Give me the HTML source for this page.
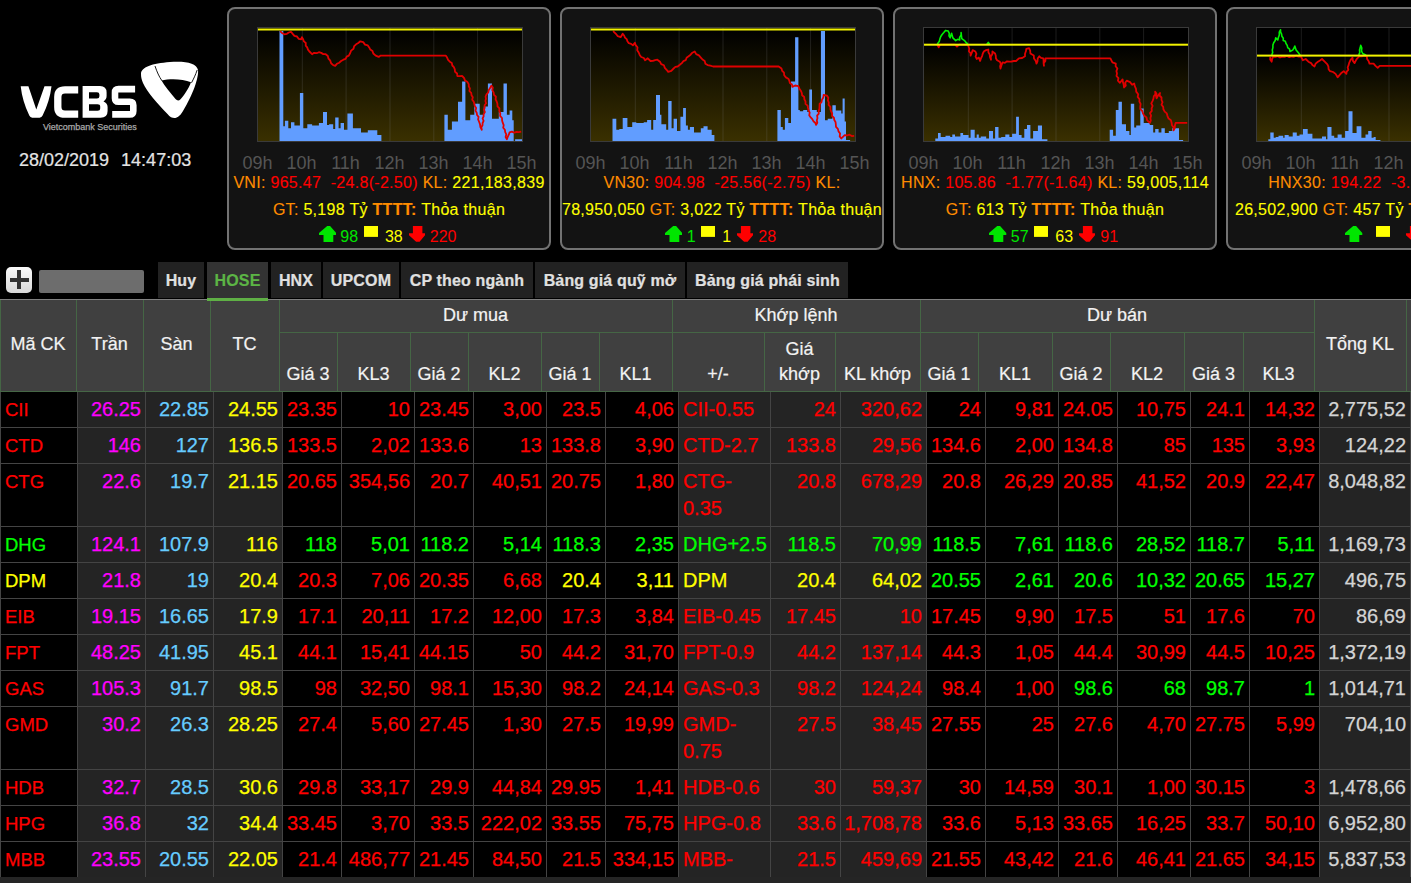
<!DOCTYPE html>
<html><head><meta charset="utf-8"><title>VCBS</title>
<style>
*{box-sizing:border-box}
html,body{margin:0;padding:0;background:#000;overflow:hidden}
body{width:1411px;height:883px;position:relative;font-family:"Liberation Sans",sans-serif;color:#ddd}
.abs{position:absolute}
.box{position:absolute;top:7px;width:324px;height:243px;border:2px solid #727272;border-radius:8px;background:#131313;overflow:hidden}
.chart{position:absolute;left:28px;top:18px;width:266px;height:115px}
.hr{position:absolute;top:144px;font-size:18px;color:#555;width:40px;text-align:center;line-height:20px}
.txt{position:absolute;left:-1px;top:160px;width:322px;text-align:center;font-size:16px;line-height:27px;color:#ff0;letter-spacing:0.3px;-webkit-text-stroke:0.12px currentColor}
.o{color:#ff8c00}.r{color:#f00}.y{color:#ff0}
.cnt{position:absolute;left:0;top:217px;width:320px;text-align:center;font-size:16px;line-height:20px;white-space:nowrap}
.tab{position:absolute;top:262px;height:36px;background:#222;color:#e0e0e0;font-weight:bold;font-size:16px;line-height:38px;text-align:center;-webkit-text-stroke:0.2px currentColor;letter-spacing:0.15px}
.hd{position:absolute;background:#404040;color:#eee;font-size:18px;text-align:center}
.c{position:absolute;font-size:20px;line-height:27px;padding-top:3.5px;white-space:normal;-webkit-text-stroke:0.25px currentColor}
</style></head><body>

<svg class="abs" style="left:0;top:0" width="220" height="140" viewBox="0 0 220 140">
<g fill="#fff">
<path d="M20.7 86.2 L28.4 86.2 L36.3 109.5 L44.5 86.2 L51.5 86.2 Q49.8 101 42.6 115.6 Q41.6 117.7 39.6 117.7 L32.2 117.7 Q30.2 117.7 29.3 115.6 Q22.3 101 20.7 86.2 Z"/>
<path d="M82.6 85.9 H100 Q106.6 85.9 106.6 92.5 V96 Q106.6 99.5 103.5 101.4 Q107.6 103.3 107.6 107 V111 Q107.6 117.8 100.5 117.8 H82.6 Z M89 92.3 H97 Q99.4 92.3 99.4 94.5 V96.3 Q99.4 98.6 97 98.6 H89 Z M89 104.2 H97.5 Q100.2 104.2 100.2 106.5 V108.2 Q100.2 110.7 97.5 110.7 H89 Z" fill-rule="evenodd"/>
<path d="M141 74 C141 67 152 63.5 170 62 C186 61 196.5 63 198 70 C199 77 193 95 183 111 C179.5 117 176.5 118 174.5 118 C172 118 170 117 167.5 114 C158 104 147 92 143 83 C141.5 79.5 141 77 141 74 Z M161.5 80.5 C170 78.3 183 78.8 191 82.3 C188.5 89 184 95.5 180.5 99.3 C178.8 101 177 100.8 175.5 99 C170 92 164.5 86 161.5 80.5 Z" fill-rule="evenodd"/>
</g>
<g fill="none" stroke="#fff" stroke-linejoin="round">
<path d="M78.2 89.9 H65 Q57.8 89.9 57.8 97 V107 Q57.8 114.2 65 114.2 H78.2" stroke-width="7.3"/>
<path d="M135.1 89.1 H118.5 Q115 89.1 115 92.6 V98.2 Q115 101.7 118.5 101.7 H129.8 Q133.3 101.7 133.3 105.2 V110.9 Q133.3 114.4 129.8 114.4 H112.2" stroke-width="6.6"/>
</g>
<path d="M155 66 C157 72 159 76.5 162 80.8" stroke="#000" stroke-width="0.9" fill="none"/>
<path d="M197.2 70 C195.5 75 193.5 79 191.5 82.8" stroke="#000" stroke-width="0.9" fill="none"/>
<text x="43" y="130" font-family="Liberation Sans" font-size="8.6" fill="#a8a8a8" stroke="#a8a8a8" stroke-width="0.25" textLength="93.7" lengthAdjust="spacingAndGlyphs">Vietcombank Securities</text>
</svg>
<div class="abs" style="left:19px;top:148.7px;font-size:18px;line-height:22px;color:#e4e4e4;white-space:pre;-webkit-text-stroke:0.2px currentColor">28/02/2019<span style="margin-left:12px">14:47:03</span></div>

<div class="box" style="left:227px">
<div class="chart"><svg width="266" height="115" viewBox="0 0 266 115"><defs><linearGradient id="g140354874106368" x1="0" y1="0" x2="0" y2="1"><stop offset="0" stop-color="#000"/><stop offset="1" stop-color="#3a3000"/></linearGradient></defs><rect x="0" y="0" width="266" height="115" fill="#000"/><rect x="1" y="2.5" width="264" height="111.5" fill="url(#g140354874106368)"/><rect x="44.8" y="1" width="1" height="113" fill="#808080" fill-opacity="0.22"/><rect x="88.6" y="1" width="1" height="113" fill="#808080" fill-opacity="0.22"/><rect x="132.5" y="1" width="1" height="113" fill="#808080" fill-opacity="0.22"/><rect x="176.3" y="1" width="1" height="113" fill="#808080" fill-opacity="0.22"/><rect x="220.1" y="1" width="1" height="113" fill="#808080" fill-opacity="0.22"/><path d="M22.5 114.5V4.1H26.3V114.5ZM26.3 114.5V99.3H27.9V114.5ZM27.9 114.5V93.8H31.3V114.5ZM31.3 114.5V101.3H34.0V114.5ZM34.0 114.5V95.2H37.4V114.5ZM37.4 114.5V98.6H42.9V114.5ZM42.9 114.5V66.0H46.3V114.5ZM46.3 114.5V101.3H50.3V114.5ZM50.3 114.5V97.2H55.1V114.5ZM55.1 114.5V98.6H61.9V114.5ZM61.9 114.5V95.9H66.0V114.5ZM66.0 114.5V85.0H70.0V114.5ZM70.0 114.5V97.9H72.1V114.5ZM72.1 114.5V97.2H76.2V114.5ZM76.2 114.5V102.0H78.2V114.5ZM78.2 114.5V90.4H81.6V114.5ZM81.6 114.5V101.3H83.6V114.5ZM83.6 114.5V95.9H87.0V114.5ZM87.0 114.5V102.7H90.4V114.5ZM90.4 114.5V86.4H95.9V114.5ZM95.9 114.5V101.3H104.0V114.5ZM104.0 114.5V105.4H110.8V114.5ZM110.8 114.5V103.3H120.3V114.5ZM120.3 114.5V108.1H124.4V114.5ZM187.4 114.5V87.7H190.8V114.5ZM190.8 114.5V102.7H194.9V114.5ZM194.9 114.5V94.5H201.0V114.5ZM201.0 114.5V74.8H205.1V114.5ZM205.1 114.5V54.4H208.4V114.5ZM208.4 114.5V93.2H213.2V114.5ZM213.2 114.5V87.7H217.3V114.5ZM217.3 114.5V76.8H222.7V114.5ZM222.7 114.5V87.7H226.8V114.5ZM226.8 114.5V79.6H230.9V114.5ZM230.9 114.5V56.5H235.0V114.5ZM235.0 114.5V91.8H241.8V114.5ZM241.8 114.5V85.0H246.5V114.5ZM246.5 114.5V56.5H249.9V114.5ZM249.9 114.5V87.7H252.6V114.5ZM252.6 114.5V83.6H255.3V114.5ZM255.3 114.5V93.2H256.7V114.5ZM258.1 114.5V112.2H265.5V114.5Z" fill="#619dff"/><polyline points="23.1,4.1 25.2,6.2 27.5,7.3 29.9,6.8 31.8,5.5 34.0,4.8 35.7,6.9 37.4,8.9 40.0,9.5 41.6,11.8 44.2,12.3 44.9,10.2 46.1,12.2 46.9,14.4 48.8,16.0 48.7,18.6 50.2,20.4 51.0,22.6 52.4,24.5 55.1,27.2 57.1,25.8 59.7,26.2 61.9,25.2 64.2,25.9 66.3,27.1 68.7,27.2 70.8,29.0 71.5,31.7 73.3,33.7 74.1,36.3 76.2,38.1 78.2,38.8 79.9,36.8 82.3,35.7 84.1,34.0 86.4,32.7 88.6,31.9 89.7,29.6 91.8,28.6 93.1,26.2 94.1,23.6 96.5,21.8 97.2,19.1 99.1,17.3 101.3,16.0 103.3,14.3 106.2,15.1 108.0,17.6 110.8,18.4 112.2,20.4 113.3,22.6 115.5,24.1 116.3,26.5 118.7,28.6 121.7,29.9 123.7,28.6 126.1,28.6 128.5,28.6 130.9,28.6 133.2,28.6 135.6,28.6 138.0,28.6 140.2,28.6 142.4,28.6 144.6,28.6 146.8,28.6 149.0,28.6 151.2,28.6 153.4,28.6 155.6,28.6 157.9,28.6 160.1,28.6 162.3,28.6 164.5,28.6 166.7,28.6 168.9,28.6 171.1,28.6 173.3,28.6 175.5,28.6 177.7,28.6 179.9,28.6 182.1,28.6 184.3,28.6 186.5,28.6 188.7,28.6 190.1,30.6 191.1,32.9 192.8,34.7 194.8,36.0 195.3,38.5 196.9,40.1 197.8,42.3 198.0,44.8 200.1,46.5 200.3,49.0 202.7,49.1 205.1,49.0 207.0,50.9 208.1,53.6 210.5,55.1 211.7,57.1 211.8,59.4 212.9,61.5 212.4,64.0 214.2,65.9 214.5,68.2 215.8,70.2 215.2,72.7 216.7,74.6 217.3,76.8 217.8,79.1 219.2,81.1 218.5,83.6 219.7,85.7 220.0,88.0 221.6,89.9 221.1,92.4 222.0,94.5 223.0,97.2 223.4,100.1 224.8,102.7 224.3,100.4 225.5,98.3 225.6,96.0 226.6,93.9 225.6,91.5 226.6,89.4 226.6,87.2 227.9,85.1 227.0,82.7 227.7,80.6 227.6,78.3 229.1,76.3 228.4,73.9 229.0,71.8 228.6,69.5 229.5,67.3 231.3,65.4 231.8,62.9 233.3,60.8 234.3,58.5 235.8,60.5 235.3,63.2 236.6,65.4 237.0,67.8 238.9,69.7 238.6,72.4 239.7,74.5 240.4,76.8 240.5,79.4 242.4,81.4 242.3,84.0 243.3,86.3 243.1,88.9 245.0,91.0 245.1,93.5 245.8,95.9 246.7,98.1 246.2,100.7 247.9,102.8 248.2,105.2 249.3,107.4 248.6,110.0 249.9,112.2 250.7,109.9 251.8,107.7 252.6,105.4 254.9,104.6 257.3,105.7 259.6,104.9 261.9,105.1 264.2,104.7" fill="none" stroke="#e00000" stroke-width="1.8" stroke-linejoin="round"/><rect x="1" y="1.5" width="264" height="2" fill="#f2f200"/><rect x="0.5" y="0.5" width="265" height="114" fill="none" stroke="#3a3a3a"/></svg></div>
<div class="hr" style="left:8.5px">09h</div>
<div class="hr" style="left:52.5px">10h</div>
<div class="hr" style="left:96.5px">11h</div>
<div class="hr" style="left:140.5px">12h</div>
<div class="hr" style="left:184.5px">13h</div>
<div class="hr" style="left:228.5px">14h</div>
<div class="hr" style="left:272.5px">15h</div>
<div class="txt"><span class="o">VNI:</span> <span class="r">965.47&nbsp; -24.8(-2.50)</span> <span class="o">KL:</span> 221,183,839 <span class="o">GT:</span> 5,198 Tỷ <b class="o">TTTT:</b> Thỏa thuận</div>
<div class="cnt" style="padding-right:2.7px"><svg width="17.3" height="16.1" viewBox="0 0 17.3 16.1" style="vertical-align:-0.3px;margin-right:4.2px"><path d="M8.2 0 H11.1 L17.3 7 V8.9 H14.3 V16.1 H4.5 V8.9 H0 V7 Z" fill="#00e600"/></svg><span style="color:#00e600">98</span><svg width="14" height="10.9" viewBox="0 0 14 10.9" style="vertical-align:4.8px;margin-left:5.5px;margin-right:7.3px"><rect width="14" height="10.9" fill="#ff0"/></svg><span class="y">38</span><svg width="16.1" height="15.8" viewBox="0 0 16.1 15.8" style="vertical-align:-0.3px;margin-left:5.8px;margin-right:5.2px"><path d="M3.9 0 H13.4 V7.2 H16.1 V9.2 L10.6 15.8 H7.1 L0 9.2 V7.2 H3.9 Z" fill="#f00"/></svg><span class="r">220</span></div>
</div>
<div class="box" style="left:560px">
<div class="chart"><svg width="266" height="115" viewBox="0 0 266 115"><defs><linearGradient id="g140354874106176" x1="0" y1="0" x2="0" y2="1"><stop offset="0" stop-color="#000"/><stop offset="1" stop-color="#3a3000"/></linearGradient></defs><rect x="0" y="0" width="266" height="115" fill="#000"/><rect x="1" y="2.5" width="264" height="111.5" fill="url(#g140354874106176)"/><rect x="44.8" y="1" width="1" height="113" fill="#808080" fill-opacity="0.22"/><rect x="88.6" y="1" width="1" height="113" fill="#808080" fill-opacity="0.22"/><rect x="132.5" y="1" width="1" height="113" fill="#808080" fill-opacity="0.22"/><rect x="176.3" y="1" width="1" height="113" fill="#808080" fill-opacity="0.22"/><rect x="220.1" y="1" width="1" height="113" fill="#808080" fill-opacity="0.22"/><path d="M22.5 114.5V91.8H26.3V114.5ZM26.3 114.5V102.7H29.3V114.5ZM29.3 114.5V102.0H32.7V114.5ZM32.7 114.5V91.1H37.4V114.5ZM37.4 114.5V99.9H42.2V114.5ZM42.2 114.5V95.2H46.3V114.5ZM46.3 114.5V95.9H53.7V114.5ZM53.7 114.5V95.2H57.1V114.5ZM57.1 114.5V93.1H61.2V114.5ZM61.2 114.5V102.7H63.2V114.5ZM63.2 114.5V93.1H66.0V114.5ZM66.0 114.5V68.0H70.0V114.5ZM70.0 114.5V87.7H71.4V114.5ZM71.4 114.5V97.2H76.2V114.5ZM76.2 114.5V102.7H78.2V114.5ZM78.2 114.5V74.1H81.6V114.5ZM81.6 114.5V101.3H83.6V114.5ZM83.6 114.5V91.8H87.0V114.5ZM87.0 114.5V104.0H90.4V114.5ZM90.4 114.5V89.7H93.1V114.5ZM93.1 114.5V80.9H95.9V114.5ZM95.9 114.5V98.6H97.9V114.5ZM97.9 114.5V102.7H99.9V114.5ZM99.9 114.5V99.9H104.0V114.5ZM104.0 114.5V105.4H106.7V114.5ZM106.7 114.5V105.4H110.8V114.5ZM110.8 114.5V101.3H113.5V114.5ZM113.5 114.5V99.3H117.6V114.5ZM117.6 114.5V102.7H121.7V114.5ZM121.7 114.5V108.1H124.4V114.5ZM187.4 114.5V83.0H190.8V114.5ZM190.8 114.5V100.0H192.8V114.5ZM192.8 114.5V102.7H194.9V114.5ZM194.9 114.5V91.1H198.3V114.5ZM198.3 114.5V95.9H201.0V114.5ZM201.0 114.5V54.4H205.1V114.5ZM205.1 114.5V10.2H208.4V114.5ZM208.4 114.5V83.0H209.8V114.5ZM209.8 114.5V84.3H213.2V114.5ZM213.2 114.5V83.0H217.3V114.5ZM217.3 114.5V85.0H219.3V114.5ZM219.3 114.5V62.6H222.0V114.5ZM222.0 114.5V83.0H224.1V114.5ZM224.1 114.5V83.0H226.8V114.5ZM226.8 114.5V85.0H230.9V114.5ZM230.9 114.5V4.1H235.0V114.5ZM235.0 114.5V93.2H237.7V114.5ZM237.7 114.5V91.8H242.4V114.5ZM242.4 114.5V78.2H245.8V114.5ZM245.8 114.5V83.6H251.3V114.5ZM251.3 114.5V86.4H252.6V114.5ZM252.6 114.5V71.4H254.7V114.5ZM254.7 114.5V94.5H256.0V114.5ZM256.0 114.5V112.9H260.1V114.5Z" fill="#619dff"/><polyline points="23.1,4.1 25.9,6.8 27.8,9.2 30.6,10.2 32.7,6.8 34.1,8.5 35.0,10.6 36.7,12.1 37.4,14.3 38.8,16.2 41.1,16.9 42.9,18.4 44.9,15.7 45.7,18.2 47.5,20.3 47.2,23.2 48.7,25.5 49.7,27.9 51.2,30.0 53.8,31.0 55.1,33.3 57.8,31.3 60.5,34.0 62.9,33.9 65.1,33.1 67.3,32.7 70.0,34.7 71.2,37.1 73.9,38.3 74.8,40.9 76.6,42.8 78.2,44.9 81.3,43.8 83.6,41.5 85.4,39.9 87.7,39.5 89.8,37.8 91.8,36.1 93.3,34.2 95.7,33.2 96.6,30.7 98.6,29.3 100.6,27.7 102.4,25.7 104.7,24.5 106.2,27.1 108.9,28.4 110.8,30.6 112.5,32.5 114.7,33.9 115.4,36.7 117.6,38.1 120.3,38.7 123.1,39.5 125.5,39.5 128.0,39.5 130.5,39.5 133.0,39.5 135.5,39.5 138.0,39.5 140.2,39.5 142.4,39.5 144.6,39.5 146.8,39.5 149.0,39.5 151.2,39.5 153.4,39.5 155.6,39.5 157.9,39.5 160.1,39.5 162.3,39.5 164.5,39.5 166.7,39.5 168.9,39.5 171.1,39.5 173.3,39.5 175.5,39.5 177.7,39.5 179.9,39.5 182.1,39.5 184.3,39.5 186.5,39.5 188.7,39.5 191.5,41.5 192.2,43.9 194.0,45.7 194.2,48.3 195.9,50.4 198.3,51.7 199.3,53.7 199.9,56.0 202.0,57.5 202.3,59.9 205.1,58.5 208.4,59.2 209.3,61.6 210.8,63.7 211.8,66.0 212.1,68.3 214.2,70.0 214.4,72.4 215.5,74.5 215.5,76.9 217.6,78.6 218.0,80.9 218.6,83.3 219.7,85.6 219.2,88.3 220.7,90.4 222.3,92.1 223.4,94.2 225.2,95.7 226.1,97.9 227.3,95.8 226.8,93.3 227.5,91.1 227.1,88.6 228.8,86.6 228.6,84.1 229.4,81.9 229.5,79.6 229.6,77.0 231.5,75.1 232.0,72.6 233.3,70.5 233.6,68.0 237.0,68.7 238.3,70.8 237.9,73.3 238.8,75.5 238.6,77.9 240.4,79.9 240.4,82.3 241.1,84.4 242.2,86.5 242.0,89.0 243.9,90.7 244.3,93.0 245.5,94.9 245.8,97.2 246.0,99.9 247.9,101.9 248.5,104.4 250.1,106.5 249.7,109.4 251.3,111.5 252.9,109.8 254.7,108.1 257.0,108.5 259.5,107.7 261.8,109.1 264.2,108.8" fill="none" stroke="#e00000" stroke-width="1.8" stroke-linejoin="round"/><rect x="1" y="1.5" width="264" height="2" fill="#f2f200"/><rect x="0.5" y="0.5" width="265" height="114" fill="none" stroke="#3a3a3a"/></svg></div>
<div class="hr" style="left:8.5px">09h</div>
<div class="hr" style="left:52.5px">10h</div>
<div class="hr" style="left:96.5px">11h</div>
<div class="hr" style="left:140.5px">12h</div>
<div class="hr" style="left:184.5px">13h</div>
<div class="hr" style="left:228.5px">14h</div>
<div class="hr" style="left:272.5px">15h</div>
<div class="txt"><span class="o">VN30:</span> <span class="r">904.98&nbsp; -25.56(-2.75)</span> <span class="o">KL:</span> 78,950,050 <span class="o">GT:</span> 3,022 Tỷ <b class="o">TTTT:</b> Thỏa thuận</div>
<div class="cnt" style="padding-right:2.7px"><svg width="17.3" height="16.1" viewBox="0 0 17.3 16.1" style="vertical-align:-0.3px;margin-right:4.2px"><path d="M8.2 0 H11.1 L17.3 7 V8.9 H14.3 V16.1 H4.5 V8.9 H0 V7 Z" fill="#00e600"/></svg><span style="color:#00e600">1</span><svg width="14" height="10.9" viewBox="0 0 14 10.9" style="vertical-align:4.8px;margin-left:5.5px;margin-right:7.3px"><rect width="14" height="10.9" fill="#ff0"/></svg><span class="y">1</span><svg width="16.1" height="15.8" viewBox="0 0 16.1 15.8" style="vertical-align:-0.3px;margin-left:5.8px;margin-right:5.2px"><path d="M3.9 0 H13.4 V7.2 H16.1 V9.2 L10.6 15.8 H7.1 L0 9.2 V7.2 H3.9 Z" fill="#f00"/></svg><span class="r">28</span></div>
</div>
<div class="box" style="left:893px">
<div class="chart"><svg width="266" height="115" viewBox="0 0 266 115"><defs><linearGradient id="g140354874106304" x1="0" y1="0" x2="0" y2="1"><stop offset="0" stop-color="#000"/><stop offset="1" stop-color="#3a3000"/></linearGradient></defs><rect x="0" y="0" width="266" height="115" fill="#000"/><rect x="1" y="17.7" width="264" height="96.3" fill="url(#g140354874106304)"/><rect x="44.8" y="1" width="1" height="113" fill="#808080" fill-opacity="0.22"/><rect x="88.6" y="1" width="1" height="113" fill="#808080" fill-opacity="0.22"/><rect x="132.5" y="1" width="1" height="113" fill="#808080" fill-opacity="0.22"/><rect x="176.3" y="1" width="1" height="113" fill="#808080" fill-opacity="0.22"/><rect x="220.1" y="1" width="1" height="113" fill="#808080" fill-opacity="0.22"/><path d="M12.3 114.5V111.5H15.0V114.5ZM15.0 114.5V106.1H17.7V114.5ZM17.7 114.5V110.1H22.5V114.5ZM22.5 114.5V108.8H27.2V114.5ZM27.2 114.5V110.1H29.3V114.5ZM29.3 114.5V107.4H32.0V114.5ZM32.0 114.5V109.5H37.4V114.5ZM37.4 114.5V106.1H40.1V114.5ZM40.1 114.5V108.1H45.6V114.5ZM45.6 114.5V110.8H47.6V114.5ZM47.6 114.5V102.7H51.7V114.5ZM51.7 114.5V110.8H53.7V114.5ZM53.7 114.5V107.4H55.8V114.5ZM55.8 114.5V110.8H57.8V114.5ZM57.8 114.5V109.5H63.2V114.5ZM63.2 114.5V111.5H66.0V114.5ZM66.0 114.5V104.0H70.0V114.5ZM70.0 114.5V111.5H72.1V114.5ZM72.1 114.5V99.9H75.5V114.5ZM75.5 114.5V110.8H78.2V114.5ZM78.2 114.5V110.1H82.3V114.5ZM82.3 114.5V107.4H86.4V114.5ZM86.4 114.5V110.1H89.1V114.5ZM89.1 114.5V106.7H93.1V114.5ZM93.1 114.5V89.7H95.9V114.5ZM95.9 114.5V108.1H98.6V114.5ZM98.6 114.5V110.8H101.3V114.5ZM101.3 114.5V102.0H104.0V114.5ZM104.0 114.5V97.9H107.4V114.5ZM107.4 114.5V111.5H110.1V114.5ZM110.1 114.5V104.0H114.9V114.5ZM114.9 114.5V98.6H119.0V114.5ZM119.0 114.5V112.2H124.4V114.5ZM186.7 114.5V102.7H190.1V114.5ZM190.1 114.5V108.8H192.8V114.5ZM192.8 114.5V83.0H195.5V114.5ZM195.5 114.5V74.8H198.9V114.5ZM198.9 114.5V97.2H203.0V114.5ZM203.0 114.5V104.0H206.4V114.5ZM206.4 114.5V108.1H207.8V114.5ZM207.8 114.5V76.8H211.2V114.5ZM211.2 114.5V100.6H213.2V114.5ZM213.2 114.5V98.6H217.3V114.5ZM217.3 114.5V81.6H220.7V114.5ZM220.7 114.5V95.9H226.8V114.5ZM226.8 114.5V97.9H230.2V114.5ZM230.2 114.5V105.4H232.2V114.5ZM232.2 114.5V102.0H235.6V114.5ZM235.6 114.5V105.4H238.4V114.5ZM238.4 114.5V101.3H241.8V114.5ZM241.8 114.5V106.1H245.8V114.5ZM245.8 114.5V104.0H249.2V114.5ZM249.2 114.5V101.3H252.6V114.5ZM252.6 114.5V101.3H256.0V114.5ZM256.0 114.5V112.9H260.1V114.5Z" fill="#619dff"/><polyline points="14.3,17.7 15.7,20.4 17.0,17.7 19.5,17.7 22.0,17.7 24.5,17.7 27.0,17.7 29.5,17.7 32.0,17.7 34.0,19.7 36.1,17.7 38.3,17.7 40.5,17.7 42.7,17.7 44.9,17.7 46.3,21.8 45.9,24.2 47.5,26.3 47.6,28.6 48.7,25.9 49.7,23.1 52.4,24.5 53.4,26.9 52.6,29.6 53.7,32.0 55.8,30.6 57.1,34.0 57.9,31.5 59.1,29.1 59.8,26.5 61.0,24.3 63.2,23.1 65.3,22.5 65.4,25.2 66.7,27.6 67.0,30.2 68.0,32.7 67.7,29.8 69.3,27.3 69.4,24.5 72.1,26.5 72.8,28.8 72.9,31.2 74.1,33.3 76.8,34.7 77.8,36.9 77.1,39.2 77.5,41.5 78.4,38.4 79.6,35.4 81.9,35.9 84.0,34.3 86.4,34.7 88.6,34.5 90.9,34.0 93.1,34.0 95.9,31.3 99.2,31.0 102.0,29.3 102.0,26.7 102.9,24.3 103.3,21.8 106.1,21.1 107.2,23.7 107.4,26.5 110.8,28.6 111.0,31.5 112.8,34.0 113.5,36.7 114.5,34.3 114.7,31.5 116.3,29.3 118.0,30.9 120.3,31.3 120.6,33.8 120.6,36.3 121.0,38.8 120.7,36.1 122.4,33.9 122.4,31.3 124.6,31.3 126.8,31.3 129.1,31.3 131.3,31.3 133.5,31.3 135.8,31.3 138.0,31.3 140.2,31.3 142.5,31.3 144.7,31.3 147.0,31.3 149.2,31.3 151.5,31.3 153.7,31.3 156.0,31.3 158.2,31.3 160.4,31.3 162.7,31.3 164.9,31.3 167.2,31.3 169.4,31.3 171.7,31.3 173.9,31.3 176.2,31.3 178.4,31.3 180.6,31.3 182.9,31.3 185.1,31.3 187.4,31.3 188.4,33.3 189.4,35.4 192.8,36.7 192.6,39.2 194.4,41.5 193.4,44.1 194.0,46.4 193.5,49.0 195.4,51.2 194.9,53.7 196.9,55.8 199.6,52.4 199.9,55.1 200.7,57.8 201.0,60.5 202.8,58.6 202.2,55.8 203.7,53.7 207.1,55.1 209.1,57.8 211.2,56.5 211.8,59.2 213.0,61.8 213.2,64.6 215.2,67.3 214.7,69.9 216.5,72.2 216.4,74.7 217.6,77.0 217.3,79.6 217.3,82.2 219.3,84.0 220.0,86.4 221.2,88.7 223.5,90.4 224.1,93.2 226.8,95.9 227.8,93.6 227.4,91.0 228.1,88.7 227.0,86.1 228.8,83.9 228.6,81.4 229.6,79.0 228.3,76.4 229.5,74.1 230.4,71.8 230.8,69.3 232.4,67.2 232.2,64.6 233.5,66.7 233.1,69.2 233.6,71.4 235.0,68.5 237.0,66.0 236.5,68.5 238.5,70.5 238.5,73.0 239.5,75.2 238.5,77.8 240.2,79.9 240.4,82.3 241.7,84.6 243.8,86.4 244.5,89.1 245.6,91.6 247.9,93.2 248.6,95.7 249.0,98.3 250.7,100.6 250.6,103.4 251.8,101.0 251.9,98.4 252.6,95.9 254.9,95.9 257.3,95.9 259.6,95.9 261.9,95.9 264.2,95.9" fill="none" stroke="#e00000" stroke-width="1.8" stroke-linejoin="round"/><polyline points="14.3,17.0 16.2,14.6 17.0,11.6 17.8,9.5 19.1,7.5 20.8,5.5 22.5,3.4 25.2,4.1 26.3,6.3 26.0,8.8 27.2,10.9 27.8,8.5 28.6,6.2 29.2,8.6 29.9,10.9 32.7,13.6 34.7,12.3 36.7,13.0 36.6,10.4 38.1,8.0 38.1,5.5 38.4,8.5 38.8,11.6 41.5,13.6 43.0,15.5 44.9,17.0" fill="none" stroke="#00f000" stroke-width="1.6" stroke-linejoin="round"/><polyline points="63.9,17.3 65.3,15.4 66.6,17.3" fill="none" stroke="#00f000" stroke-width="1.6" stroke-linejoin="round"/><rect x="1" y="16.7" width="264" height="2" fill="#f2f200"/><rect x="0.5" y="0.5" width="265" height="114" fill="none" stroke="#3a3a3a"/></svg></div>
<div class="hr" style="left:8.5px">09h</div>
<div class="hr" style="left:52.5px">10h</div>
<div class="hr" style="left:96.5px">11h</div>
<div class="hr" style="left:140.5px">12h</div>
<div class="hr" style="left:184.5px">13h</div>
<div class="hr" style="left:228.5px">14h</div>
<div class="hr" style="left:272.5px">15h</div>
<div class="txt"><span class="o">HNX:</span> <span class="r">105.86&nbsp; -1.77(-1.64)</span> <span class="o">KL:</span> 59,005,114 <span class="o">GT:</span> 613 Tỷ <b class="o">TTTT:</b> Thỏa thuận</div>
<div class="cnt" style="padding-right:2.7px"><svg width="17.3" height="16.1" viewBox="0 0 17.3 16.1" style="vertical-align:-0.3px;margin-right:4.2px"><path d="M8.2 0 H11.1 L17.3 7 V8.9 H14.3 V16.1 H4.5 V8.9 H0 V7 Z" fill="#00e600"/></svg><span style="color:#00e600">57</span><svg width="14" height="10.9" viewBox="0 0 14 10.9" style="vertical-align:4.8px;margin-left:5.5px;margin-right:7.3px"><rect width="14" height="10.9" fill="#ff0"/></svg><span class="y">63</span><svg width="16.1" height="15.8" viewBox="0 0 16.1 15.8" style="vertical-align:-0.3px;margin-left:5.8px;margin-right:5.2px"><path d="M3.9 0 H13.4 V7.2 H16.1 V9.2 L10.6 15.8 H7.1 L0 9.2 V7.2 H3.9 Z" fill="#f00"/></svg><span class="r">91</span></div>
</div>
<div class="box" style="left:1226px">
<div class="chart"><svg width="266" height="115" viewBox="0 0 266 115"><defs><linearGradient id="g140354874034368" x1="0" y1="0" x2="0" y2="1"><stop offset="0" stop-color="#000"/><stop offset="1" stop-color="#3a3000"/></linearGradient></defs><rect x="0" y="0" width="266" height="115" fill="#000"/><rect x="1" y="28.6" width="264" height="85.4" fill="url(#g140354874034368)"/><rect x="44.8" y="1" width="1" height="113" fill="#808080" fill-opacity="0.22"/><rect x="88.6" y="1" width="1" height="113" fill="#808080" fill-opacity="0.22"/><rect x="132.5" y="1" width="1" height="113" fill="#808080" fill-opacity="0.22"/><rect x="176.3" y="1" width="1" height="113" fill="#808080" fill-opacity="0.22"/><rect x="220.1" y="1" width="1" height="113" fill="#808080" fill-opacity="0.22"/><path d="M12.3 114.5V112.2H14.3V114.5ZM14.3 114.5V105.4H17.7V114.5ZM17.7 114.5V110.8H19.7V114.5ZM19.7 114.5V110.1H22.5V114.5ZM22.5 114.5V108.8H27.2V114.5ZM27.2 114.5V110.8H28.6V114.5ZM28.6 114.5V108.1H32.7V114.5ZM32.7 114.5V109.5H36.7V114.5ZM36.7 114.5V105.4H40.8V114.5ZM40.8 114.5V108.8H43.5V114.5ZM43.5 114.5V107.4H46.9V114.5ZM46.9 114.5V102.0H51.7V114.5ZM51.7 114.5V106.7H56.4V114.5ZM56.4 114.5V111.5H66.0V114.5ZM66.0 114.5V109.5H70.0V114.5ZM70.0 114.5V112.2H71.4V114.5ZM71.4 114.5V99.9H75.5V114.5ZM75.5 114.5V108.8H78.2V114.5ZM78.2 114.5V110.8H81.6V114.5ZM81.6 114.5V107.4H85.7V114.5ZM85.7 114.5V110.8H89.1V114.5ZM89.1 114.5V104.0H92.5V114.5ZM92.5 114.5V84.3H96.5V114.5ZM96.5 114.5V106.1H100.6V114.5ZM100.6 114.5V99.3H105.4V114.5ZM105.4 114.5V110.8H109.5V114.5ZM109.5 114.5V107.4H112.2V114.5ZM112.2 114.5V104.0H115.6V114.5ZM115.6 114.5V110.8H117.6V114.5ZM117.6 114.5V110.1H119.7V114.5ZM119.7 114.5V112.9H124.4V114.5Z" fill="#619dff"/><polyline points="14.3,29.9 14.2,32.5 15.7,34.7 16.1,32.2 17.0,29.9 19.4,29.9 21.7,29.2 24.0,30.5 26.3,29.6 28.6,29.8 30.9,28.9 33.3,30.1 35.6,29.5 37.9,29.8 40.2,28.6 42.6,29.7 44.9,29.3 45.9,31.3 46.9,33.3 49.7,32.0 52.4,34.7 55.1,36.1 56.4,38.1 58.5,39.5 59.6,36.6 61.9,34.7 64.0,33.5 66.0,32.0 68.7,34.7 71.4,37.4 72.4,39.6 72.6,42.2 74.1,44.2 77.1,45.0 79.6,46.9 81.6,50.3 83.3,48.3 85.0,46.3 87.7,44.2 90.4,46.9 90.7,44.7 92.3,42.8 91.7,40.3 92.6,38.2 93.1,36.1 94.4,33.1 96.5,30.6 96.8,33.6 98.6,36.1 99.8,33.6 101.3,31.3 103.3,29.3 105.8,29.3 108.3,28.6 110.8,29.3 111.1,32.0 112.7,34.2 113.5,36.7 117.6,36.7 119.5,38.9 121.7,40.8 123.7,38.8 126.1,38.8 128.5,38.8 130.9,38.8 133.2,38.8 135.6,38.8 138.0,38.8 140.2,38.8 142.4,38.8 144.6,38.8 146.8,38.8 149.0,38.8 151.2,38.8 153.5,38.8 155.7,38.8 157.9,38.8 160.1,38.8 162.3,38.8 164.5,38.8 166.7,38.8 168.9,38.8 171.1,38.8 173.3,38.8 175.5,38.8 177.7,38.8 179.9,38.8 182.1,38.8 184.3,38.8 186.6,38.8 188.8,38.8 191.0,38.8 193.2,38.8 195.4,38.8 197.6,38.8 199.8,38.8 202.0,38.8 204.2,38.8 206.4,38.8 208.6,38.8 210.8,38.8 213.0,38.8 215.2,38.8 217.4,38.8 219.7,38.8 221.9,38.8 224.1,38.8 226.3,38.8 228.5,38.8 230.7,38.8 232.9,38.8 235.1,38.8 237.3,38.8 239.5,38.8 241.7,38.8 243.9,38.8 246.1,38.8 248.3,38.8 250.6,38.8 252.8,38.8 255.0,38.8 257.2,38.8 259.4,38.8 261.6,38.8 263.8,38.8 266.0,38.8" fill="none" stroke="#e00000" stroke-width="1.8" stroke-linejoin="round"/><polyline points="15.7,27.9 16.7,25.6 16.3,23.0 16.9,20.6 16.9,18.0 17.7,15.7 19.2,13.5 19.7,10.9 21.8,13.0 22.4,10.4 23.3,7.9 23.3,5.2 24.5,2.8 24.6,5.0 25.6,7.1 25.9,9.3 27.3,11.3 27.2,13.6 29.3,14.3 30.0,16.5 31.2,18.4 31.7,20.6 33.6,22.2 34.0,24.5 36.7,23.1 37.9,21.2 38.8,19.1 40.1,23.1 42.2,25.6 44.2,28.2" fill="none" stroke="#00f000" stroke-width="1.6" stroke-linejoin="round"/><polyline points="102.7,27.9 103.8,25.6 103.5,23.1 104.2,20.8 104.7,18.4 105.8,21.0 105.5,24.0 106.7,26.5 110.1,28.2" fill="none" stroke="#00f000" stroke-width="1.6" stroke-linejoin="round"/><rect x="1" y="27.6" width="264" height="2" fill="#f2f200"/><rect x="0.5" y="0.5" width="265" height="114" fill="none" stroke="#3a3a3a"/></svg></div>
<div class="hr" style="left:8.5px">09h</div>
<div class="hr" style="left:52.5px">10h</div>
<div class="hr" style="left:96.5px">11h</div>
<div class="hr" style="left:140.5px">12h</div>
<div class="hr" style="left:184.5px">13h</div>
<div class="hr" style="left:228.5px">14h</div>
<div class="hr" style="left:272.5px">15h</div>
<div class="txt"><span class="o">HNX30:</span> <span class="r">194.22&nbsp; -3.32(-1.68)</span> <span class="o">KL:</span> 26,502,900 <span class="o">GT:</span> 457 Tỷ <b class="o">TTTT:</b> Thỏa thuận</div>
<div class="cnt" style="text-align:left;padding-left:117.4px"><svg width="17.3" height="16.1" viewBox="0 0 17.3 16.1" style="vertical-align:-0.3px;margin-right:4.2px"><path d="M8.2 0 H11.1 L17.3 7 V8.9 H14.3 V16.1 H4.5 V8.9 H0 V7 Z" fill="#00e600"/></svg><span style="color:#00e600"></span><svg width="14" height="10.9" viewBox="0 0 14 10.9" style="vertical-align:4.8px;margin-left:9.1px;margin-right:7.3px"><rect width="14" height="10.9" fill="#ff0"/></svg><span class="y"></span><svg width="16.1" height="15.8" viewBox="0 0 16.1 15.8" style="vertical-align:-0.3px;margin-left:8.8px;margin-right:5.2px"><path d="M3.9 0 H13.4 V7.2 H16.1 V9.2 L10.6 15.8 H7.1 L0 9.2 V7.2 H3.9 Z" fill="#f00"/></svg><span class="r">14</span></div>
</div>
<div class="abs" style="left:6px;top:267px;width:26px;height:26px;border-radius:5px;background:linear-gradient(#fafafa,#d8d8d8)"></div>
<div class="abs" style="left:10px;top:277.6px;width:19px;height:4.8px;background:#333"></div>
<div class="abs" style="left:17px;top:270px;width:4.3px;height:19px;background:#333"></div>
<div class="abs" style="left:39px;top:270px;width:105px;height:23px;border-radius:2px;background:#6d6d6d"></div>

<div class="tab" style="left:158px;width:46px;">Huy</div>
<div class="tab" style="left:207px;width:61px;background:#333;color:#5cb545;">HOSE</div>
<div class="tab" style="left:271px;width:50px;">HNX</div>
<div class="tab" style="left:323px;width:76px;">UPCOM</div>
<div class="tab" style="left:401px;width:132px;">CP theo ngành</div>
<div class="tab" style="left:535px;width:150px;">Bảng giá quỹ mở</div>
<div class="tab" style="left:687px;width:161px;">Bảng giá phái sinh</div>
<div class="abs" style="left:0;top:299px;width:1411px;height:1px;background:#808080"></div>
<div class="abs" style="left:207px;top:298px;width:61px;height:3px;background:#5fb045;z-index:3"></div>
<div class="abs" style="left:0;top:300px;width:1411px;height:92px;background:#404040"></div>
<div class="abs" style="left:0px;top:300px;width:1px;height:91px;background:#456645"></div>
<div class="abs" style="left:76px;top:300px;width:1px;height:91px;background:#456645"></div>
<div class="abs" style="left:143px;top:300px;width:1px;height:91px;background:#456645"></div>
<div class="abs" style="left:210px;top:300px;width:1px;height:91px;background:#456645"></div>
<div class="abs" style="left:279px;top:300px;width:1px;height:91px;background:#456645"></div>
<div class="abs" style="left:672px;top:300px;width:1px;height:91px;background:#456645"></div>
<div class="abs" style="left:920px;top:300px;width:1px;height:91px;background:#456645"></div>
<div class="abs" style="left:1314px;top:300px;width:1px;height:91px;background:#456645"></div>
<div class="abs" style="left:1406px;top:300px;width:1px;height:91px;background:#456645"></div>
<div class="abs" style="left:337px;top:332px;width:1px;height:59px;background:#456645"></div>
<div class="abs" style="left:410px;top:332px;width:1px;height:59px;background:#456645"></div>
<div class="abs" style="left:468px;top:332px;width:1px;height:59px;background:#456645"></div>
<div class="abs" style="left:541px;top:332px;width:1px;height:59px;background:#456645"></div>
<div class="abs" style="left:599px;top:332px;width:1px;height:59px;background:#456645"></div>
<div class="abs" style="left:764px;top:332px;width:1px;height:59px;background:#456645"></div>
<div class="abs" style="left:835px;top:332px;width:1px;height:59px;background:#456645"></div>
<div class="abs" style="left:978px;top:332px;width:1px;height:59px;background:#456645"></div>
<div class="abs" style="left:1052px;top:332px;width:1px;height:59px;background:#456645"></div>
<div class="abs" style="left:1110px;top:332px;width:1px;height:59px;background:#456645"></div>
<div class="abs" style="left:1184px;top:332px;width:1px;height:59px;background:#456645"></div>
<div class="abs" style="left:1243px;top:332px;width:1px;height:59px;background:#456645"></div>
<div class="abs" style="left:279px;top:332px;width:1035px;height:1px;background:#456645"></div>
<div class="abs" style="left:0px;top:391px;width:1411px;height:1px;background:#456645"></div>
<div class="abs" style="left:0px;top:300px;width:76px;height:91px;display:flex;align-items:center;justify-content:center;text-align:center;font-size:18px;line-height:25px;color:#f2f2f2;padding-bottom:2px;-webkit-text-stroke:0.2px currentColor">Mã CK</div>
<div class="abs" style="left:76px;top:300px;width:67px;height:91px;display:flex;align-items:center;justify-content:center;text-align:center;font-size:18px;line-height:25px;color:#f2f2f2;padding-bottom:2px;-webkit-text-stroke:0.2px currentColor">Trần</div>
<div class="abs" style="left:143px;top:300px;width:67px;height:91px;display:flex;align-items:center;justify-content:center;text-align:center;font-size:18px;line-height:25px;color:#f2f2f2;padding-bottom:2px;-webkit-text-stroke:0.2px currentColor">Sàn</div>
<div class="abs" style="left:210px;top:300px;width:69px;height:91px;display:flex;align-items:center;justify-content:center;text-align:center;font-size:18px;line-height:25px;color:#f2f2f2;padding-bottom:2px;-webkit-text-stroke:0.2px currentColor">TC</div>
<div class="abs" style="left:1314px;top:300px;width:92px;height:91px;display:flex;align-items:center;justify-content:center;text-align:center;font-size:18px;line-height:25px;color:#f2f2f2;padding-bottom:2px;-webkit-text-stroke:0.2px currentColor">Tổng KL</div>
<div class="abs" style="left:279px;top:300px;width:393px;height:32px;display:flex;align-items:center;justify-content:center;text-align:center;font-size:18px;line-height:25px;color:#f2f2f2;padding-bottom:2px;-webkit-text-stroke:0.2px currentColor">Dư mua</div>
<div class="abs" style="left:672px;top:300px;width:248px;height:32px;display:flex;align-items:center;justify-content:center;text-align:center;font-size:18px;line-height:25px;color:#f2f2f2;padding-bottom:2px;-webkit-text-stroke:0.2px currentColor">Khớp lệnh</div>
<div class="abs" style="left:920px;top:300px;width:394px;height:32px;display:flex;align-items:center;justify-content:center;text-align:center;font-size:18px;line-height:25px;color:#f2f2f2;padding-bottom:2px;-webkit-text-stroke:0.2px currentColor">Dư bán</div>
<div class="abs" style="left:279px;top:332px;width:58px;height:59px;display:flex;align-items:flex-end;justify-content:center;text-align:center;font-size:18px;line-height:25px;padding-bottom:4px;color:#f2f2f2;-webkit-text-stroke:0.2px currentColor">Giá 3</div>
<div class="abs" style="left:337px;top:332px;width:73px;height:59px;display:flex;align-items:flex-end;justify-content:center;text-align:center;font-size:18px;line-height:25px;padding-bottom:4px;color:#f2f2f2;-webkit-text-stroke:0.2px currentColor">KL3</div>
<div class="abs" style="left:410px;top:332px;width:58px;height:59px;display:flex;align-items:flex-end;justify-content:center;text-align:center;font-size:18px;line-height:25px;padding-bottom:4px;color:#f2f2f2;-webkit-text-stroke:0.2px currentColor">Giá 2</div>
<div class="abs" style="left:468px;top:332px;width:73px;height:59px;display:flex;align-items:flex-end;justify-content:center;text-align:center;font-size:18px;line-height:25px;padding-bottom:4px;color:#f2f2f2;-webkit-text-stroke:0.2px currentColor">KL2</div>
<div class="abs" style="left:541px;top:332px;width:58px;height:59px;display:flex;align-items:flex-end;justify-content:center;text-align:center;font-size:18px;line-height:25px;padding-bottom:4px;color:#f2f2f2;-webkit-text-stroke:0.2px currentColor">Giá 1</div>
<div class="abs" style="left:599px;top:332px;width:73px;height:59px;display:flex;align-items:flex-end;justify-content:center;text-align:center;font-size:18px;line-height:25px;padding-bottom:4px;color:#f2f2f2;-webkit-text-stroke:0.2px currentColor">KL1</div>
<div class="abs" style="left:672px;top:332px;width:92px;height:59px;display:flex;align-items:flex-end;justify-content:center;text-align:center;font-size:18px;line-height:25px;padding-bottom:4px;color:#f2f2f2;-webkit-text-stroke:0.2px currentColor">+/-</div>
<div class="abs" style="left:764px;top:332px;width:71px;height:59px;display:flex;align-items:flex-end;justify-content:center;text-align:center;font-size:18px;line-height:25px;padding-bottom:4px;color:#f2f2f2;-webkit-text-stroke:0.2px currentColor">Giá<br>khớp</div>
<div class="abs" style="left:835px;top:332px;width:85px;height:59px;display:flex;align-items:flex-end;justify-content:center;text-align:center;font-size:18px;line-height:25px;padding-bottom:4px;color:#f2f2f2;-webkit-text-stroke:0.2px currentColor">KL khớp</div>
<div class="abs" style="left:920px;top:332px;width:58px;height:59px;display:flex;align-items:flex-end;justify-content:center;text-align:center;font-size:18px;line-height:25px;padding-bottom:4px;color:#f2f2f2;-webkit-text-stroke:0.2px currentColor">Giá 1</div>
<div class="abs" style="left:978px;top:332px;width:74px;height:59px;display:flex;align-items:flex-end;justify-content:center;text-align:center;font-size:18px;line-height:25px;padding-bottom:4px;color:#f2f2f2;-webkit-text-stroke:0.2px currentColor">KL1</div>
<div class="abs" style="left:1052px;top:332px;width:58px;height:59px;display:flex;align-items:flex-end;justify-content:center;text-align:center;font-size:18px;line-height:25px;padding-bottom:4px;color:#f2f2f2;-webkit-text-stroke:0.2px currentColor">Giá 2</div>
<div class="abs" style="left:1110px;top:332px;width:74px;height:59px;display:flex;align-items:flex-end;justify-content:center;text-align:center;font-size:18px;line-height:25px;padding-bottom:4px;color:#f2f2f2;-webkit-text-stroke:0.2px currentColor">KL2</div>
<div class="abs" style="left:1184px;top:332px;width:59px;height:59px;display:flex;align-items:flex-end;justify-content:center;text-align:center;font-size:18px;line-height:25px;padding-bottom:4px;color:#f2f2f2;-webkit-text-stroke:0.2px currentColor">Giá 3</div>
<div class="abs" style="left:1243px;top:332px;width:71px;height:59px;display:flex;align-items:flex-end;justify-content:center;text-align:center;font-size:18px;line-height:25px;padding-bottom:4px;color:#f2f2f2;-webkit-text-stroke:0.2px currentColor">KL3</div>
<div class="c" style="left:1px;top:392px;width:76px;height:35px;background:#000;color:#f00;text-align:left;padding-left:4px;font-size:18.5px;padding-top:4.3px">CII</div>
<div class="c" style="left:78px;top:392px;width:67px;height:35px;background:#242424;color:#f0f;text-align:right;padding-right:4px">26.25</div>
<div class="c" style="left:146px;top:392px;width:67px;height:35px;background:#242424;color:#66ccff;text-align:right;padding-right:4px">22.85</div>
<div class="c" style="left:214px;top:392px;width:68px;height:35px;background:#242424;color:#ff0;text-align:right;padding-right:4px">24.55</div>
<div class="c" style="left:283px;top:392px;width:58px;height:35px;background:#000;color:#f00;text-align:right;padding-right:4px">23.35</div>
<div class="c" style="left:342px;top:392px;width:72px;height:35px;background:#000;color:#f00;text-align:right;padding-right:4px">10</div>
<div class="c" style="left:415px;top:392px;width:58px;height:35px;background:#000;color:#f00;text-align:right;padding-right:4px">23.45</div>
<div class="c" style="left:474px;top:392px;width:72px;height:35px;background:#000;color:#f00;text-align:right;padding-right:4px">3,00</div>
<div class="c" style="left:547px;top:392px;width:58px;height:35px;background:#000;color:#f00;text-align:right;padding-right:4px">23.5</div>
<div class="c" style="left:606px;top:392px;width:72px;height:35px;background:#000;color:#f00;text-align:right;padding-right:4px">4,06</div>
<div class="c" style="left:679px;top:392px;width:91px;height:35px;background:#242424;color:#f00;text-align:left;padding-left:4px">CII-0.55</div>
<div class="c" style="left:771px;top:392px;width:69px;height:35px;background:#242424;color:#f00;text-align:right;padding-right:4px">24</div>
<div class="c" style="left:841px;top:392px;width:85px;height:35px;background:#242424;color:#f00;text-align:right;padding-right:4px">320,62</div>
<div class="c" style="left:927px;top:392px;width:58px;height:35px;background:#000;color:#f00;text-align:right;padding-right:4px">24</div>
<div class="c" style="left:986px;top:392px;width:72px;height:35px;background:#000;color:#f00;text-align:right;padding-right:4px">9,81</div>
<div class="c" style="left:1059px;top:392px;width:58px;height:35px;background:#000;color:#f00;text-align:right;padding-right:4px">24.05</div>
<div class="c" style="left:1118px;top:392px;width:72px;height:35px;background:#000;color:#f00;text-align:right;padding-right:4px">10,75</div>
<div class="c" style="left:1191px;top:392px;width:58px;height:35px;background:#000;color:#f00;text-align:right;padding-right:4px">24.1</div>
<div class="c" style="left:1250px;top:392px;width:69px;height:35px;background:#000;color:#f00;text-align:right;padding-right:4px">14,32</div>
<div class="c" style="left:1320px;top:392px;width:90px;height:35px;background:#242424;color:#d4d4d4;text-align:right;padding-right:4px">2,775,52</div>
<div class="abs" style="left:0px;top:427px;width:1411px;height:1px;background:#444"></div>
<div class="c" style="left:1px;top:428px;width:76px;height:35px;background:#000;color:#f00;text-align:left;padding-left:4px;font-size:18.5px;padding-top:4.3px">CTD</div>
<div class="c" style="left:78px;top:428px;width:67px;height:35px;background:#242424;color:#f0f;text-align:right;padding-right:4px">146</div>
<div class="c" style="left:146px;top:428px;width:67px;height:35px;background:#242424;color:#66ccff;text-align:right;padding-right:4px">127</div>
<div class="c" style="left:214px;top:428px;width:68px;height:35px;background:#242424;color:#ff0;text-align:right;padding-right:4px">136.5</div>
<div class="c" style="left:283px;top:428px;width:58px;height:35px;background:#000;color:#f00;text-align:right;padding-right:4px">133.5</div>
<div class="c" style="left:342px;top:428px;width:72px;height:35px;background:#000;color:#f00;text-align:right;padding-right:4px">2,02</div>
<div class="c" style="left:415px;top:428px;width:58px;height:35px;background:#000;color:#f00;text-align:right;padding-right:4px">133.6</div>
<div class="c" style="left:474px;top:428px;width:72px;height:35px;background:#000;color:#f00;text-align:right;padding-right:4px">13</div>
<div class="c" style="left:547px;top:428px;width:58px;height:35px;background:#000;color:#f00;text-align:right;padding-right:4px">133.8</div>
<div class="c" style="left:606px;top:428px;width:72px;height:35px;background:#000;color:#f00;text-align:right;padding-right:4px">3,90</div>
<div class="c" style="left:679px;top:428px;width:91px;height:35px;background:#242424;color:#f00;text-align:left;padding-left:4px">CTD-2.7</div>
<div class="c" style="left:771px;top:428px;width:69px;height:35px;background:#242424;color:#f00;text-align:right;padding-right:4px">133.8</div>
<div class="c" style="left:841px;top:428px;width:85px;height:35px;background:#242424;color:#f00;text-align:right;padding-right:4px">29,56</div>
<div class="c" style="left:927px;top:428px;width:58px;height:35px;background:#000;color:#f00;text-align:right;padding-right:4px">134.6</div>
<div class="c" style="left:986px;top:428px;width:72px;height:35px;background:#000;color:#f00;text-align:right;padding-right:4px">2,00</div>
<div class="c" style="left:1059px;top:428px;width:58px;height:35px;background:#000;color:#f00;text-align:right;padding-right:4px">134.8</div>
<div class="c" style="left:1118px;top:428px;width:72px;height:35px;background:#000;color:#f00;text-align:right;padding-right:4px">85</div>
<div class="c" style="left:1191px;top:428px;width:58px;height:35px;background:#000;color:#f00;text-align:right;padding-right:4px">135</div>
<div class="c" style="left:1250px;top:428px;width:69px;height:35px;background:#000;color:#f00;text-align:right;padding-right:4px">3,93</div>
<div class="c" style="left:1320px;top:428px;width:90px;height:35px;background:#242424;color:#d4d4d4;text-align:right;padding-right:4px">124,22</div>
<div class="abs" style="left:0px;top:463px;width:1411px;height:1px;background:#444"></div>
<div class="c" style="left:1px;top:464px;width:76px;height:62px;background:#000;color:#f00;text-align:left;padding-left:4px;font-size:18.5px;padding-top:4.3px">CTG</div>
<div class="c" style="left:78px;top:464px;width:67px;height:62px;background:#242424;color:#f0f;text-align:right;padding-right:4px">22.6</div>
<div class="c" style="left:146px;top:464px;width:67px;height:62px;background:#242424;color:#66ccff;text-align:right;padding-right:4px">19.7</div>
<div class="c" style="left:214px;top:464px;width:68px;height:62px;background:#242424;color:#ff0;text-align:right;padding-right:4px">21.15</div>
<div class="c" style="left:283px;top:464px;width:58px;height:62px;background:#000;color:#f00;text-align:right;padding-right:4px">20.65</div>
<div class="c" style="left:342px;top:464px;width:72px;height:62px;background:#000;color:#f00;text-align:right;padding-right:4px">354,56</div>
<div class="c" style="left:415px;top:464px;width:58px;height:62px;background:#000;color:#f00;text-align:right;padding-right:4px">20.7</div>
<div class="c" style="left:474px;top:464px;width:72px;height:62px;background:#000;color:#f00;text-align:right;padding-right:4px">40,51</div>
<div class="c" style="left:547px;top:464px;width:58px;height:62px;background:#000;color:#f00;text-align:right;padding-right:4px">20.75</div>
<div class="c" style="left:606px;top:464px;width:72px;height:62px;background:#000;color:#f00;text-align:right;padding-right:4px">1,80</div>
<div class="c" style="left:679px;top:464px;width:91px;height:62px;background:#242424;color:#f00;text-align:left;padding-left:4px">CTG-<br>0.35</div>
<div class="c" style="left:771px;top:464px;width:69px;height:62px;background:#242424;color:#f00;text-align:right;padding-right:4px">20.8</div>
<div class="c" style="left:841px;top:464px;width:85px;height:62px;background:#242424;color:#f00;text-align:right;padding-right:4px">678,29</div>
<div class="c" style="left:927px;top:464px;width:58px;height:62px;background:#000;color:#f00;text-align:right;padding-right:4px">20.8</div>
<div class="c" style="left:986px;top:464px;width:72px;height:62px;background:#000;color:#f00;text-align:right;padding-right:4px">26,29</div>
<div class="c" style="left:1059px;top:464px;width:58px;height:62px;background:#000;color:#f00;text-align:right;padding-right:4px">20.85</div>
<div class="c" style="left:1118px;top:464px;width:72px;height:62px;background:#000;color:#f00;text-align:right;padding-right:4px">41,52</div>
<div class="c" style="left:1191px;top:464px;width:58px;height:62px;background:#000;color:#f00;text-align:right;padding-right:4px">20.9</div>
<div class="c" style="left:1250px;top:464px;width:69px;height:62px;background:#000;color:#f00;text-align:right;padding-right:4px">22,47</div>
<div class="c" style="left:1320px;top:464px;width:90px;height:62px;background:#242424;color:#d4d4d4;text-align:right;padding-right:4px">8,048,82</div>
<div class="abs" style="left:0px;top:526px;width:1411px;height:1px;background:#444"></div>
<div class="c" style="left:1px;top:527px;width:76px;height:35px;background:#000;color:#0f0;text-align:left;padding-left:4px;font-size:18.5px;padding-top:4.3px">DHG</div>
<div class="c" style="left:78px;top:527px;width:67px;height:35px;background:#242424;color:#f0f;text-align:right;padding-right:4px">124.1</div>
<div class="c" style="left:146px;top:527px;width:67px;height:35px;background:#242424;color:#66ccff;text-align:right;padding-right:4px">107.9</div>
<div class="c" style="left:214px;top:527px;width:68px;height:35px;background:#242424;color:#ff0;text-align:right;padding-right:4px">116</div>
<div class="c" style="left:283px;top:527px;width:58px;height:35px;background:#000;color:#0f0;text-align:right;padding-right:4px">118</div>
<div class="c" style="left:342px;top:527px;width:72px;height:35px;background:#000;color:#0f0;text-align:right;padding-right:4px">5,01</div>
<div class="c" style="left:415px;top:527px;width:58px;height:35px;background:#000;color:#0f0;text-align:right;padding-right:4px">118.2</div>
<div class="c" style="left:474px;top:527px;width:72px;height:35px;background:#000;color:#0f0;text-align:right;padding-right:4px">5,14</div>
<div class="c" style="left:547px;top:527px;width:58px;height:35px;background:#000;color:#0f0;text-align:right;padding-right:4px">118.3</div>
<div class="c" style="left:606px;top:527px;width:72px;height:35px;background:#000;color:#0f0;text-align:right;padding-right:4px">2,35</div>
<div class="c" style="left:679px;top:527px;width:91px;height:35px;background:#242424;color:#0f0;text-align:left;padding-left:4px">DHG+2.5</div>
<div class="c" style="left:771px;top:527px;width:69px;height:35px;background:#242424;color:#0f0;text-align:right;padding-right:4px">118.5</div>
<div class="c" style="left:841px;top:527px;width:85px;height:35px;background:#242424;color:#0f0;text-align:right;padding-right:4px">70,99</div>
<div class="c" style="left:927px;top:527px;width:58px;height:35px;background:#000;color:#0f0;text-align:right;padding-right:4px">118.5</div>
<div class="c" style="left:986px;top:527px;width:72px;height:35px;background:#000;color:#0f0;text-align:right;padding-right:4px">7,61</div>
<div class="c" style="left:1059px;top:527px;width:58px;height:35px;background:#000;color:#0f0;text-align:right;padding-right:4px">118.6</div>
<div class="c" style="left:1118px;top:527px;width:72px;height:35px;background:#000;color:#0f0;text-align:right;padding-right:4px">28,52</div>
<div class="c" style="left:1191px;top:527px;width:58px;height:35px;background:#000;color:#0f0;text-align:right;padding-right:4px">118.7</div>
<div class="c" style="left:1250px;top:527px;width:69px;height:35px;background:#000;color:#0f0;text-align:right;padding-right:4px">5,11</div>
<div class="c" style="left:1320px;top:527px;width:90px;height:35px;background:#242424;color:#d4d4d4;text-align:right;padding-right:4px">1,169,73</div>
<div class="abs" style="left:0px;top:562px;width:1411px;height:1px;background:#444"></div>
<div class="c" style="left:1px;top:563px;width:76px;height:35px;background:#000;color:#ff0;text-align:left;padding-left:4px;font-size:18.5px;padding-top:4.3px">DPM</div>
<div class="c" style="left:78px;top:563px;width:67px;height:35px;background:#242424;color:#f0f;text-align:right;padding-right:4px">21.8</div>
<div class="c" style="left:146px;top:563px;width:67px;height:35px;background:#242424;color:#66ccff;text-align:right;padding-right:4px">19</div>
<div class="c" style="left:214px;top:563px;width:68px;height:35px;background:#242424;color:#ff0;text-align:right;padding-right:4px">20.4</div>
<div class="c" style="left:283px;top:563px;width:58px;height:35px;background:#000;color:#f00;text-align:right;padding-right:4px">20.3</div>
<div class="c" style="left:342px;top:563px;width:72px;height:35px;background:#000;color:#f00;text-align:right;padding-right:4px">7,06</div>
<div class="c" style="left:415px;top:563px;width:58px;height:35px;background:#000;color:#f00;text-align:right;padding-right:4px">20.35</div>
<div class="c" style="left:474px;top:563px;width:72px;height:35px;background:#000;color:#f00;text-align:right;padding-right:4px">6,68</div>
<div class="c" style="left:547px;top:563px;width:58px;height:35px;background:#000;color:#ff0;text-align:right;padding-right:4px">20.4</div>
<div class="c" style="left:606px;top:563px;width:72px;height:35px;background:#000;color:#ff0;text-align:right;padding-right:4px">3,11</div>
<div class="c" style="left:679px;top:563px;width:91px;height:35px;background:#242424;color:#ff0;text-align:left;padding-left:4px">DPM</div>
<div class="c" style="left:771px;top:563px;width:69px;height:35px;background:#242424;color:#ff0;text-align:right;padding-right:4px">20.4</div>
<div class="c" style="left:841px;top:563px;width:85px;height:35px;background:#242424;color:#ff0;text-align:right;padding-right:4px">64,02</div>
<div class="c" style="left:927px;top:563px;width:58px;height:35px;background:#000;color:#0f0;text-align:right;padding-right:4px">20.55</div>
<div class="c" style="left:986px;top:563px;width:72px;height:35px;background:#000;color:#0f0;text-align:right;padding-right:4px">2,61</div>
<div class="c" style="left:1059px;top:563px;width:58px;height:35px;background:#000;color:#0f0;text-align:right;padding-right:4px">20.6</div>
<div class="c" style="left:1118px;top:563px;width:72px;height:35px;background:#000;color:#0f0;text-align:right;padding-right:4px">10,32</div>
<div class="c" style="left:1191px;top:563px;width:58px;height:35px;background:#000;color:#0f0;text-align:right;padding-right:4px">20.65</div>
<div class="c" style="left:1250px;top:563px;width:69px;height:35px;background:#000;color:#0f0;text-align:right;padding-right:4px">15,27</div>
<div class="c" style="left:1320px;top:563px;width:90px;height:35px;background:#242424;color:#d4d4d4;text-align:right;padding-right:4px">496,75</div>
<div class="abs" style="left:0px;top:598px;width:1411px;height:1px;background:#444"></div>
<div class="c" style="left:1px;top:599px;width:76px;height:35px;background:#000;color:#f00;text-align:left;padding-left:4px;font-size:18.5px;padding-top:4.3px">EIB</div>
<div class="c" style="left:78px;top:599px;width:67px;height:35px;background:#242424;color:#f0f;text-align:right;padding-right:4px">19.15</div>
<div class="c" style="left:146px;top:599px;width:67px;height:35px;background:#242424;color:#66ccff;text-align:right;padding-right:4px">16.65</div>
<div class="c" style="left:214px;top:599px;width:68px;height:35px;background:#242424;color:#ff0;text-align:right;padding-right:4px">17.9</div>
<div class="c" style="left:283px;top:599px;width:58px;height:35px;background:#000;color:#f00;text-align:right;padding-right:4px">17.1</div>
<div class="c" style="left:342px;top:599px;width:72px;height:35px;background:#000;color:#f00;text-align:right;padding-right:4px">20,11</div>
<div class="c" style="left:415px;top:599px;width:58px;height:35px;background:#000;color:#f00;text-align:right;padding-right:4px">17.2</div>
<div class="c" style="left:474px;top:599px;width:72px;height:35px;background:#000;color:#f00;text-align:right;padding-right:4px">12,00</div>
<div class="c" style="left:547px;top:599px;width:58px;height:35px;background:#000;color:#f00;text-align:right;padding-right:4px">17.3</div>
<div class="c" style="left:606px;top:599px;width:72px;height:35px;background:#000;color:#f00;text-align:right;padding-right:4px">3,84</div>
<div class="c" style="left:679px;top:599px;width:91px;height:35px;background:#242424;color:#f00;text-align:left;padding-left:4px">EIB-0.45</div>
<div class="c" style="left:771px;top:599px;width:69px;height:35px;background:#242424;color:#f00;text-align:right;padding-right:4px">17.45</div>
<div class="c" style="left:841px;top:599px;width:85px;height:35px;background:#242424;color:#f00;text-align:right;padding-right:4px">10</div>
<div class="c" style="left:927px;top:599px;width:58px;height:35px;background:#000;color:#f00;text-align:right;padding-right:4px">17.45</div>
<div class="c" style="left:986px;top:599px;width:72px;height:35px;background:#000;color:#f00;text-align:right;padding-right:4px">9,90</div>
<div class="c" style="left:1059px;top:599px;width:58px;height:35px;background:#000;color:#f00;text-align:right;padding-right:4px">17.5</div>
<div class="c" style="left:1118px;top:599px;width:72px;height:35px;background:#000;color:#f00;text-align:right;padding-right:4px">51</div>
<div class="c" style="left:1191px;top:599px;width:58px;height:35px;background:#000;color:#f00;text-align:right;padding-right:4px">17.6</div>
<div class="c" style="left:1250px;top:599px;width:69px;height:35px;background:#000;color:#f00;text-align:right;padding-right:4px">70</div>
<div class="c" style="left:1320px;top:599px;width:90px;height:35px;background:#242424;color:#d4d4d4;text-align:right;padding-right:4px">86,69</div>
<div class="abs" style="left:0px;top:634px;width:1411px;height:1px;background:#444"></div>
<div class="c" style="left:1px;top:635px;width:76px;height:35px;background:#000;color:#f00;text-align:left;padding-left:4px;font-size:18.5px;padding-top:4.3px">FPT</div>
<div class="c" style="left:78px;top:635px;width:67px;height:35px;background:#242424;color:#f0f;text-align:right;padding-right:4px">48.25</div>
<div class="c" style="left:146px;top:635px;width:67px;height:35px;background:#242424;color:#66ccff;text-align:right;padding-right:4px">41.95</div>
<div class="c" style="left:214px;top:635px;width:68px;height:35px;background:#242424;color:#ff0;text-align:right;padding-right:4px">45.1</div>
<div class="c" style="left:283px;top:635px;width:58px;height:35px;background:#000;color:#f00;text-align:right;padding-right:4px">44.1</div>
<div class="c" style="left:342px;top:635px;width:72px;height:35px;background:#000;color:#f00;text-align:right;padding-right:4px">15,41</div>
<div class="c" style="left:415px;top:635px;width:58px;height:35px;background:#000;color:#f00;text-align:right;padding-right:4px">44.15</div>
<div class="c" style="left:474px;top:635px;width:72px;height:35px;background:#000;color:#f00;text-align:right;padding-right:4px">50</div>
<div class="c" style="left:547px;top:635px;width:58px;height:35px;background:#000;color:#f00;text-align:right;padding-right:4px">44.2</div>
<div class="c" style="left:606px;top:635px;width:72px;height:35px;background:#000;color:#f00;text-align:right;padding-right:4px">31,70</div>
<div class="c" style="left:679px;top:635px;width:91px;height:35px;background:#242424;color:#f00;text-align:left;padding-left:4px">FPT-0.9</div>
<div class="c" style="left:771px;top:635px;width:69px;height:35px;background:#242424;color:#f00;text-align:right;padding-right:4px">44.2</div>
<div class="c" style="left:841px;top:635px;width:85px;height:35px;background:#242424;color:#f00;text-align:right;padding-right:4px">137,14</div>
<div class="c" style="left:927px;top:635px;width:58px;height:35px;background:#000;color:#f00;text-align:right;padding-right:4px">44.3</div>
<div class="c" style="left:986px;top:635px;width:72px;height:35px;background:#000;color:#f00;text-align:right;padding-right:4px">1,05</div>
<div class="c" style="left:1059px;top:635px;width:58px;height:35px;background:#000;color:#f00;text-align:right;padding-right:4px">44.4</div>
<div class="c" style="left:1118px;top:635px;width:72px;height:35px;background:#000;color:#f00;text-align:right;padding-right:4px">30,99</div>
<div class="c" style="left:1191px;top:635px;width:58px;height:35px;background:#000;color:#f00;text-align:right;padding-right:4px">44.5</div>
<div class="c" style="left:1250px;top:635px;width:69px;height:35px;background:#000;color:#f00;text-align:right;padding-right:4px">10,25</div>
<div class="c" style="left:1320px;top:635px;width:90px;height:35px;background:#242424;color:#d4d4d4;text-align:right;padding-right:4px">1,372,19</div>
<div class="abs" style="left:0px;top:670px;width:1411px;height:1px;background:#444"></div>
<div class="c" style="left:1px;top:671px;width:76px;height:35px;background:#000;color:#f00;text-align:left;padding-left:4px;font-size:18.5px;padding-top:4.3px">GAS</div>
<div class="c" style="left:78px;top:671px;width:67px;height:35px;background:#242424;color:#f0f;text-align:right;padding-right:4px">105.3</div>
<div class="c" style="left:146px;top:671px;width:67px;height:35px;background:#242424;color:#66ccff;text-align:right;padding-right:4px">91.7</div>
<div class="c" style="left:214px;top:671px;width:68px;height:35px;background:#242424;color:#ff0;text-align:right;padding-right:4px">98.5</div>
<div class="c" style="left:283px;top:671px;width:58px;height:35px;background:#000;color:#f00;text-align:right;padding-right:4px">98</div>
<div class="c" style="left:342px;top:671px;width:72px;height:35px;background:#000;color:#f00;text-align:right;padding-right:4px">32,50</div>
<div class="c" style="left:415px;top:671px;width:58px;height:35px;background:#000;color:#f00;text-align:right;padding-right:4px">98.1</div>
<div class="c" style="left:474px;top:671px;width:72px;height:35px;background:#000;color:#f00;text-align:right;padding-right:4px">15,30</div>
<div class="c" style="left:547px;top:671px;width:58px;height:35px;background:#000;color:#f00;text-align:right;padding-right:4px">98.2</div>
<div class="c" style="left:606px;top:671px;width:72px;height:35px;background:#000;color:#f00;text-align:right;padding-right:4px">24,14</div>
<div class="c" style="left:679px;top:671px;width:91px;height:35px;background:#242424;color:#f00;text-align:left;padding-left:4px">GAS-0.3</div>
<div class="c" style="left:771px;top:671px;width:69px;height:35px;background:#242424;color:#f00;text-align:right;padding-right:4px">98.2</div>
<div class="c" style="left:841px;top:671px;width:85px;height:35px;background:#242424;color:#f00;text-align:right;padding-right:4px">124,24</div>
<div class="c" style="left:927px;top:671px;width:58px;height:35px;background:#000;color:#f00;text-align:right;padding-right:4px">98.4</div>
<div class="c" style="left:986px;top:671px;width:72px;height:35px;background:#000;color:#f00;text-align:right;padding-right:4px">1,00</div>
<div class="c" style="left:1059px;top:671px;width:58px;height:35px;background:#000;color:#0f0;text-align:right;padding-right:4px">98.6</div>
<div class="c" style="left:1118px;top:671px;width:72px;height:35px;background:#000;color:#0f0;text-align:right;padding-right:4px">68</div>
<div class="c" style="left:1191px;top:671px;width:58px;height:35px;background:#000;color:#0f0;text-align:right;padding-right:4px">98.7</div>
<div class="c" style="left:1250px;top:671px;width:69px;height:35px;background:#000;color:#0f0;text-align:right;padding-right:4px">1</div>
<div class="c" style="left:1320px;top:671px;width:90px;height:35px;background:#242424;color:#d4d4d4;text-align:right;padding-right:4px">1,014,71</div>
<div class="abs" style="left:0px;top:706px;width:1411px;height:1px;background:#444"></div>
<div class="c" style="left:1px;top:707px;width:76px;height:62px;background:#000;color:#f00;text-align:left;padding-left:4px;font-size:18.5px;padding-top:4.3px">GMD</div>
<div class="c" style="left:78px;top:707px;width:67px;height:62px;background:#242424;color:#f0f;text-align:right;padding-right:4px">30.2</div>
<div class="c" style="left:146px;top:707px;width:67px;height:62px;background:#242424;color:#66ccff;text-align:right;padding-right:4px">26.3</div>
<div class="c" style="left:214px;top:707px;width:68px;height:62px;background:#242424;color:#ff0;text-align:right;padding-right:4px">28.25</div>
<div class="c" style="left:283px;top:707px;width:58px;height:62px;background:#000;color:#f00;text-align:right;padding-right:4px">27.4</div>
<div class="c" style="left:342px;top:707px;width:72px;height:62px;background:#000;color:#f00;text-align:right;padding-right:4px">5,60</div>
<div class="c" style="left:415px;top:707px;width:58px;height:62px;background:#000;color:#f00;text-align:right;padding-right:4px">27.45</div>
<div class="c" style="left:474px;top:707px;width:72px;height:62px;background:#000;color:#f00;text-align:right;padding-right:4px">1,30</div>
<div class="c" style="left:547px;top:707px;width:58px;height:62px;background:#000;color:#f00;text-align:right;padding-right:4px">27.5</div>
<div class="c" style="left:606px;top:707px;width:72px;height:62px;background:#000;color:#f00;text-align:right;padding-right:4px">19,99</div>
<div class="c" style="left:679px;top:707px;width:91px;height:62px;background:#242424;color:#f00;text-align:left;padding-left:4px">GMD-<br>0.75</div>
<div class="c" style="left:771px;top:707px;width:69px;height:62px;background:#242424;color:#f00;text-align:right;padding-right:4px">27.5</div>
<div class="c" style="left:841px;top:707px;width:85px;height:62px;background:#242424;color:#f00;text-align:right;padding-right:4px">38,45</div>
<div class="c" style="left:927px;top:707px;width:58px;height:62px;background:#000;color:#f00;text-align:right;padding-right:4px">27.55</div>
<div class="c" style="left:986px;top:707px;width:72px;height:62px;background:#000;color:#f00;text-align:right;padding-right:4px">25</div>
<div class="c" style="left:1059px;top:707px;width:58px;height:62px;background:#000;color:#f00;text-align:right;padding-right:4px">27.6</div>
<div class="c" style="left:1118px;top:707px;width:72px;height:62px;background:#000;color:#f00;text-align:right;padding-right:4px">4,70</div>
<div class="c" style="left:1191px;top:707px;width:58px;height:62px;background:#000;color:#f00;text-align:right;padding-right:4px">27.75</div>
<div class="c" style="left:1250px;top:707px;width:69px;height:62px;background:#000;color:#f00;text-align:right;padding-right:4px">5,99</div>
<div class="c" style="left:1320px;top:707px;width:90px;height:62px;background:#242424;color:#d4d4d4;text-align:right;padding-right:4px">704,10</div>
<div class="abs" style="left:0px;top:769px;width:1411px;height:1px;background:#444"></div>
<div class="c" style="left:1px;top:770px;width:76px;height:35px;background:#000;color:#f00;text-align:left;padding-left:4px;font-size:18.5px;padding-top:4.3px">HDB</div>
<div class="c" style="left:78px;top:770px;width:67px;height:35px;background:#242424;color:#f0f;text-align:right;padding-right:4px">32.7</div>
<div class="c" style="left:146px;top:770px;width:67px;height:35px;background:#242424;color:#66ccff;text-align:right;padding-right:4px">28.5</div>
<div class="c" style="left:214px;top:770px;width:68px;height:35px;background:#242424;color:#ff0;text-align:right;padding-right:4px">30.6</div>
<div class="c" style="left:283px;top:770px;width:58px;height:35px;background:#000;color:#f00;text-align:right;padding-right:4px">29.8</div>
<div class="c" style="left:342px;top:770px;width:72px;height:35px;background:#000;color:#f00;text-align:right;padding-right:4px">33,17</div>
<div class="c" style="left:415px;top:770px;width:58px;height:35px;background:#000;color:#f00;text-align:right;padding-right:4px">29.9</div>
<div class="c" style="left:474px;top:770px;width:72px;height:35px;background:#000;color:#f00;text-align:right;padding-right:4px">44,84</div>
<div class="c" style="left:547px;top:770px;width:58px;height:35px;background:#000;color:#f00;text-align:right;padding-right:4px">29.95</div>
<div class="c" style="left:606px;top:770px;width:72px;height:35px;background:#000;color:#f00;text-align:right;padding-right:4px">1,41</div>
<div class="c" style="left:679px;top:770px;width:91px;height:35px;background:#242424;color:#f00;text-align:left;padding-left:4px">HDB-0.6</div>
<div class="c" style="left:771px;top:770px;width:69px;height:35px;background:#242424;color:#f00;text-align:right;padding-right:4px">30</div>
<div class="c" style="left:841px;top:770px;width:85px;height:35px;background:#242424;color:#f00;text-align:right;padding-right:4px">59,37</div>
<div class="c" style="left:927px;top:770px;width:58px;height:35px;background:#000;color:#f00;text-align:right;padding-right:4px">30</div>
<div class="c" style="left:986px;top:770px;width:72px;height:35px;background:#000;color:#f00;text-align:right;padding-right:4px">14,59</div>
<div class="c" style="left:1059px;top:770px;width:58px;height:35px;background:#000;color:#f00;text-align:right;padding-right:4px">30.1</div>
<div class="c" style="left:1118px;top:770px;width:72px;height:35px;background:#000;color:#f00;text-align:right;padding-right:4px">1,00</div>
<div class="c" style="left:1191px;top:770px;width:58px;height:35px;background:#000;color:#f00;text-align:right;padding-right:4px">30.15</div>
<div class="c" style="left:1250px;top:770px;width:69px;height:35px;background:#000;color:#f00;text-align:right;padding-right:4px">3</div>
<div class="c" style="left:1320px;top:770px;width:90px;height:35px;background:#242424;color:#d4d4d4;text-align:right;padding-right:4px">1,478,66</div>
<div class="abs" style="left:0px;top:805px;width:1411px;height:1px;background:#444"></div>
<div class="c" style="left:1px;top:806px;width:76px;height:35px;background:#000;color:#f00;text-align:left;padding-left:4px;font-size:18.5px;padding-top:4.3px">HPG</div>
<div class="c" style="left:78px;top:806px;width:67px;height:35px;background:#242424;color:#f0f;text-align:right;padding-right:4px">36.8</div>
<div class="c" style="left:146px;top:806px;width:67px;height:35px;background:#242424;color:#66ccff;text-align:right;padding-right:4px">32</div>
<div class="c" style="left:214px;top:806px;width:68px;height:35px;background:#242424;color:#ff0;text-align:right;padding-right:4px">34.4</div>
<div class="c" style="left:283px;top:806px;width:58px;height:35px;background:#000;color:#f00;text-align:right;padding-right:4px">33.45</div>
<div class="c" style="left:342px;top:806px;width:72px;height:35px;background:#000;color:#f00;text-align:right;padding-right:4px">3,70</div>
<div class="c" style="left:415px;top:806px;width:58px;height:35px;background:#000;color:#f00;text-align:right;padding-right:4px">33.5</div>
<div class="c" style="left:474px;top:806px;width:72px;height:35px;background:#000;color:#f00;text-align:right;padding-right:4px">222,02</div>
<div class="c" style="left:547px;top:806px;width:58px;height:35px;background:#000;color:#f00;text-align:right;padding-right:4px">33.55</div>
<div class="c" style="left:606px;top:806px;width:72px;height:35px;background:#000;color:#f00;text-align:right;padding-right:4px">75,75</div>
<div class="c" style="left:679px;top:806px;width:91px;height:35px;background:#242424;color:#f00;text-align:left;padding-left:4px">HPG-0.8</div>
<div class="c" style="left:771px;top:806px;width:69px;height:35px;background:#242424;color:#f00;text-align:right;padding-right:4px">33.6</div>
<div class="c" style="left:841px;top:806px;width:85px;height:35px;background:#242424;color:#f00;text-align:right;padding-right:4px">1,708,78</div>
<div class="c" style="left:927px;top:806px;width:58px;height:35px;background:#000;color:#f00;text-align:right;padding-right:4px">33.6</div>
<div class="c" style="left:986px;top:806px;width:72px;height:35px;background:#000;color:#f00;text-align:right;padding-right:4px">5,13</div>
<div class="c" style="left:1059px;top:806px;width:58px;height:35px;background:#000;color:#f00;text-align:right;padding-right:4px">33.65</div>
<div class="c" style="left:1118px;top:806px;width:72px;height:35px;background:#000;color:#f00;text-align:right;padding-right:4px">16,25</div>
<div class="c" style="left:1191px;top:806px;width:58px;height:35px;background:#000;color:#f00;text-align:right;padding-right:4px">33.7</div>
<div class="c" style="left:1250px;top:806px;width:69px;height:35px;background:#000;color:#f00;text-align:right;padding-right:4px">50,10</div>
<div class="c" style="left:1320px;top:806px;width:90px;height:35px;background:#242424;color:#d4d4d4;text-align:right;padding-right:4px">6,952,80</div>
<div class="abs" style="left:0px;top:841px;width:1411px;height:1px;background:#444"></div>
<div class="c" style="left:1px;top:842px;width:76px;height:35px;background:#000;color:#f00;text-align:left;padding-left:4px;font-size:18.5px;padding-top:4.3px">MBB</div>
<div class="c" style="left:78px;top:842px;width:67px;height:35px;background:#242424;color:#f0f;text-align:right;padding-right:4px">23.55</div>
<div class="c" style="left:146px;top:842px;width:67px;height:35px;background:#242424;color:#66ccff;text-align:right;padding-right:4px">20.55</div>
<div class="c" style="left:214px;top:842px;width:68px;height:35px;background:#242424;color:#ff0;text-align:right;padding-right:4px">22.05</div>
<div class="c" style="left:283px;top:842px;width:58px;height:35px;background:#000;color:#f00;text-align:right;padding-right:4px">21.4</div>
<div class="c" style="left:342px;top:842px;width:72px;height:35px;background:#000;color:#f00;text-align:right;padding-right:4px">486,77</div>
<div class="c" style="left:415px;top:842px;width:58px;height:35px;background:#000;color:#f00;text-align:right;padding-right:4px">21.45</div>
<div class="c" style="left:474px;top:842px;width:72px;height:35px;background:#000;color:#f00;text-align:right;padding-right:4px">84,50</div>
<div class="c" style="left:547px;top:842px;width:58px;height:35px;background:#000;color:#f00;text-align:right;padding-right:4px">21.5</div>
<div class="c" style="left:606px;top:842px;width:72px;height:35px;background:#000;color:#f00;text-align:right;padding-right:4px">334,15</div>
<div class="c" style="left:679px;top:842px;width:91px;height:35px;background:#242424;color:#f00;text-align:left;padding-left:4px">MBB-</div>
<div class="c" style="left:771px;top:842px;width:69px;height:35px;background:#242424;color:#f00;text-align:right;padding-right:4px">21.5</div>
<div class="c" style="left:841px;top:842px;width:85px;height:35px;background:#242424;color:#f00;text-align:right;padding-right:4px">459,69</div>
<div class="c" style="left:927px;top:842px;width:58px;height:35px;background:#000;color:#f00;text-align:right;padding-right:4px">21.55</div>
<div class="c" style="left:986px;top:842px;width:72px;height:35px;background:#000;color:#f00;text-align:right;padding-right:4px">43,42</div>
<div class="c" style="left:1059px;top:842px;width:58px;height:35px;background:#000;color:#f00;text-align:right;padding-right:4px">21.6</div>
<div class="c" style="left:1118px;top:842px;width:72px;height:35px;background:#000;color:#f00;text-align:right;padding-right:4px">46,41</div>
<div class="c" style="left:1191px;top:842px;width:58px;height:35px;background:#000;color:#f00;text-align:right;padding-right:4px">21.65</div>
<div class="c" style="left:1250px;top:842px;width:69px;height:35px;background:#000;color:#f00;text-align:right;padding-right:4px">34,15</div>
<div class="c" style="left:1320px;top:842px;width:90px;height:35px;background:#242424;color:#d4d4d4;text-align:right;padding-right:4px">5,837,53</div>
<div class="abs" style="left:0px;top:877px;width:1411px;height:1px;background:#444"></div>
<div class="abs" style="left:0px;top:392px;width:1px;height:485px;background:#444"></div>
<div class="abs" style="left:77px;top:392px;width:1px;height:485px;background:#444"></div>
<div class="abs" style="left:145px;top:392px;width:1px;height:485px;background:#444"></div>
<div class="abs" style="left:213px;top:392px;width:1px;height:485px;background:#444"></div>
<div class="abs" style="left:282px;top:392px;width:1px;height:485px;background:#444"></div>
<div class="abs" style="left:341px;top:392px;width:1px;height:485px;background:#444"></div>
<div class="abs" style="left:414px;top:392px;width:1px;height:485px;background:#444"></div>
<div class="abs" style="left:473px;top:392px;width:1px;height:485px;background:#444"></div>
<div class="abs" style="left:546px;top:392px;width:1px;height:485px;background:#444"></div>
<div class="abs" style="left:605px;top:392px;width:1px;height:485px;background:#444"></div>
<div class="abs" style="left:678px;top:392px;width:1px;height:485px;background:#444"></div>
<div class="abs" style="left:770px;top:392px;width:1px;height:485px;background:#444"></div>
<div class="abs" style="left:840px;top:392px;width:1px;height:485px;background:#444"></div>
<div class="abs" style="left:926px;top:392px;width:1px;height:485px;background:#444"></div>
<div class="abs" style="left:985px;top:392px;width:1px;height:485px;background:#444"></div>
<div class="abs" style="left:1058px;top:392px;width:1px;height:485px;background:#444"></div>
<div class="abs" style="left:1117px;top:392px;width:1px;height:485px;background:#444"></div>
<div class="abs" style="left:1190px;top:392px;width:1px;height:485px;background:#444"></div>
<div class="abs" style="left:1249px;top:392px;width:1px;height:485px;background:#444"></div>
<div class="abs" style="left:1319px;top:392px;width:1px;height:485px;background:#444"></div>
<div class="abs" style="left:1410px;top:392px;width:1px;height:485px;background:#444"></div>
<div class="abs" style="left:0;top:877px;width:1411px;height:6px;background:#252525"></div>
</body></html>
